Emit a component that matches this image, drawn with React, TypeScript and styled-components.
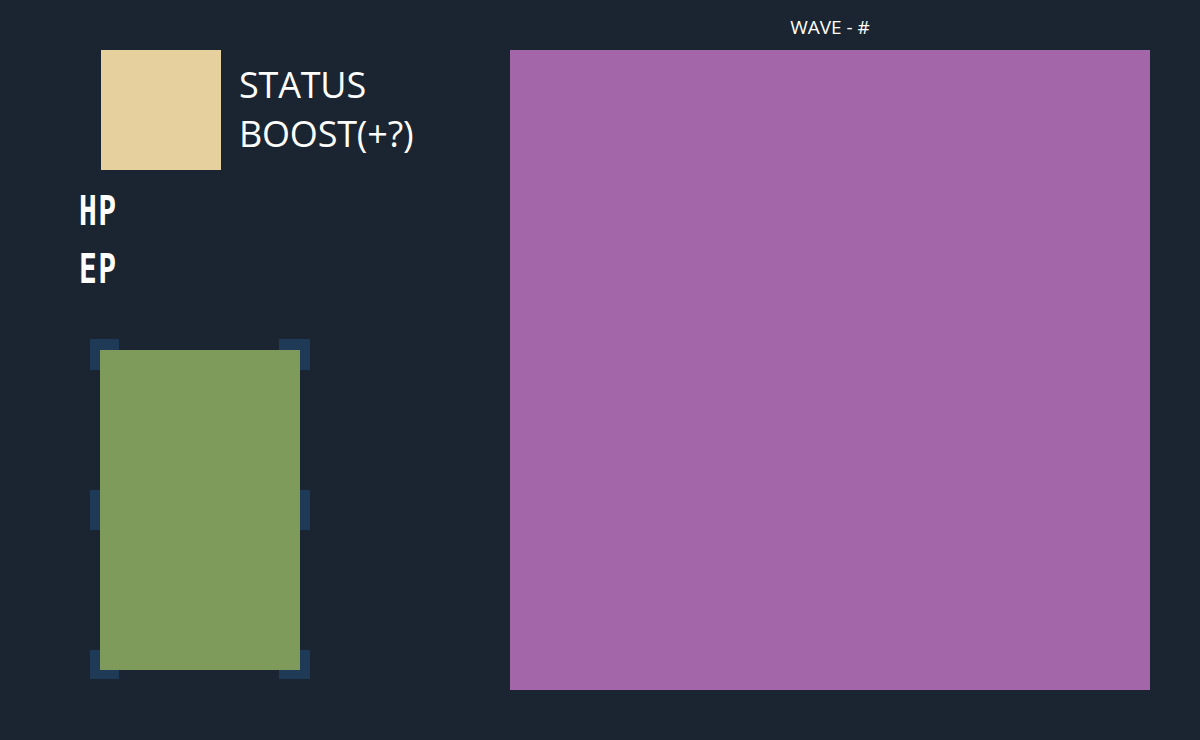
import React from 'react';
import styled, { createGlobalStyle } from 'styled-components';

const GlobalStyle = createGlobalStyle`
  html, body {
    margin: 0;
    padding: 0;
    background: #1b2532;
  }
  body {
    font-family: "Open Sans", "Noto Sans", sans-serif;
    color: #ffffff;
  }
`;

const Screen = styled.div`
  width: 1200px;
  height: 740px;
  display: flex;
  background: #1b2532;
  overflow: hidden;
`;

const LeftCol = styled.div`
  width: 510px;
  display: flex;
  flex-direction: column;
`;

const StatusRow = styled.div`
  display: flex;
  gap: 18px;
  margin: 50px 0 0 101px;
`;

const StatusIcon = styled.div`
  width: 120px;
  height: 120px;
  background: #e6d09e;
  flex-shrink: 0;
`;

const StatusText = styled.div`
  margin-top: 10px;
  font-size: 36px;
  line-height: 49px;
  letter-spacing: -0.2px;
  white-space: nowrap;
`;

const Stats = styled.div`
  display: flex;
  flex-direction: column;
  margin: 12px 0 0 79px;
`;

const StatLabel = styled.div`
  font-family: "DejaVu Sans Mono", monospace;
  font-weight: bold;
  font-size: 40px;
  line-height: 58px;
  height: 58px;
  transform: scaleX(0.74);
  transform-origin: left center;
  letter-spacing: 2px;
`;

const CardWrap = styled.div`
  position: relative;
  width: 200px;
  height: 320px;
  margin: 52px 0 0 100px;
`;

const Bracket = styled.div<{ $x: number; $y: number; $w: number; $h: number }>`
  position: absolute;
  left: ${(p) => p.$x}px;
  top: ${(p) => p.$y}px;
  width: ${(p) => p.$w}px;
  height: ${(p) => p.$h}px;
  background: #1e3a56;
`;

const Card = styled.div`
  position: relative;
  width: 200px;
  height: 320px;
  background: #7e9b5c;
`;

const RightCol = styled.div`
  width: 640px;
  display: flex;
  flex-direction: column;
`;

const WaveTitle = styled.div`
  height: 50px;
  display: flex;
  align-items: center;
  justify-content: center;
  padding-top: 4px;
  box-sizing: border-box;
  font-size: 19px;
`;

const Board = styled.div`
  width: 640px;
  height: 640px;
  background: #a366a8;
`;

const brackets = [
  { x: -10, y: -11, w: 29, h: 31 },
  { x: 179, y: -11, w: 31, h: 31 },
  { x: -10, y: 140, w: 30, h: 40 },
  { x: 180, y: 140, w: 30, h: 40 },
  { x: -10, y: 300, w: 29, h: 29 },
  { x: 179, y: 300, w: 31, h: 29 },
];

export default function App() {
  return (
    <Screen>
      <GlobalStyle />
      <LeftCol>
        <StatusRow>
          <StatusIcon />
          <StatusText>
            STATUS
            <br />
            BOOST(+?)
          </StatusText>
        </StatusRow>
        <Stats>
          <StatLabel>HP</StatLabel>
          <StatLabel>EP</StatLabel>
        </Stats>
        <CardWrap>
          {brackets.map((b, i) => (
            <Bracket key={i} $x={b.x} $y={b.y} $w={b.w} $h={b.h} />
          ))}
          <Card />
        </CardWrap>
      </LeftCol>
      <RightCol>
        <WaveTitle>WAVE - #</WaveTitle>
        <Board />
      </RightCol>
    </Screen>
  );
}
